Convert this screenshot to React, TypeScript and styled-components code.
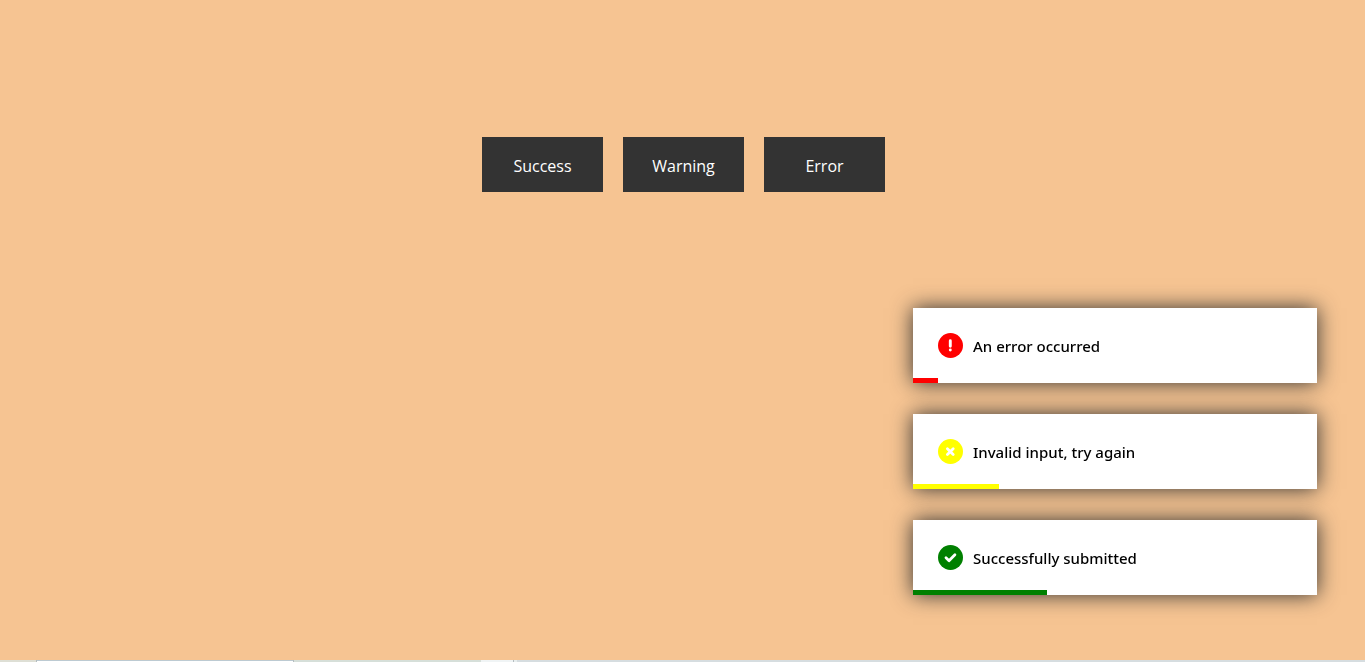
import React from "react";
import styled, { createGlobalStyle } from "styled-components";

const GlobalStyle = createGlobalStyle`
  * { box-sizing: border-box; margin: 0; padding: 0; }
  body {
    background: #f6c492;
    font-family: "Segoe UI", "Noto Sans", "Open Sans", sans-serif;
  }
`;

const Page = styled.div`
  min-height: 100vh;
  display: flex;
  flex-direction: column;
`;

const Actions = styled.main`
  flex: 1;
  display: flex;
  justify-content: center;
  align-items: flex-start;
  gap: 20px;
  padding: 137px 0 0 2px;
`;

const ActionButton = styled.button`
  width: 121px;
  height: 55px;
  padding-top: 3px;
  border: 0;
  background: #333;
  color: #fff;
  font-family: "Segoe UI", "Open Sans", sans-serif;
  font-size: 16px;
  cursor: pointer;
`;

const ToastStack = styled.div`
  position: fixed;
  right: 48px;
  bottom: 67px;
  display: flex;
  flex-direction: column;
  gap: 31px;
`;

const Toast = styled.div`
  width: 404px;
  height: 75px;
  display: flex;
  flex-direction: column;
  background: #fff;
  box-shadow: 0 0 20px #333;
`;

const Message = styled.p`
  flex: 1;
  display: flex;
  align-items: center;
  gap: 10px;
  padding: 5px 25px 0;
  color: #000;
  font-size: 15px;
  font-weight: 500;
`;

const StatusIcon = styled.svg`
  width: 25px;
  height: 25px;
  fill: none;
  stroke: #fff;
  stroke-linecap: round;
  stroke-linejoin: round;
`;

const Timer = styled.div<{ $color: string }>`
  height: 5px;
  background: ${({ $color }) => $color};
`;

const Taskbar = styled.footer`
  display: flex;
  height: 2px;
  background: #d6dde0;
`;

const Segment = styled.div<{ $width: number; $color: string; $line?: string }>`
  width: ${({ $width }) => $width}px;
  background: ${({ $color }) => $color};
  border-top: ${({ $line }) => ($line ? `1px solid ${$line}` : "0")};
`;

const toasts = [
  { text: "An error occurred", color: "red", mark: "M12.3 7.8v5.4M12.3 17v.1", stroke: 2.9, left: 25 },
  { text: "Invalid input, try again", color: "yellow", mark: "M9.4 9.7l5.8 5.8M15.2 9.7l-5.8 5.8", stroke: 2.8, left: 86 },
  { text: "Successfully submitted", color: "green", mark: "M8 12.8l3 2.9 5.9-6", stroke: 2.8, left: 134 },
];

export default function App() {
  return (
    <Page>
      <GlobalStyle />
      <Actions>
        <ActionButton type="button">Success</ActionButton>
        <ActionButton type="button">Warning</ActionButton>
        <ActionButton type="button">Error</ActionButton>
      </Actions>
      <ToastStack role="status">
        {toasts.map(({ text, color, mark, stroke, left }) => (
          <Toast key={color}>
            <Message>
              <StatusIcon viewBox="0 0 25 25" aria-hidden="true">
                <circle cx="12.5" cy="12.5" r="12.5" fill={color} stroke="none" />
                <path d={mark} strokeWidth={stroke} />
              </StatusIcon>
              {text}
            </Message>
            <Timer $color={color} style={{ width: left }} />
          </Toast>
        ))}
      </ToastStack>
      <Taskbar>
        <Segment $width={36} $color="#dedfd5" />
        <Segment $width={1} $color="#b4bcc0" />
        <Segment $width={256} $color="#ffffff" $line="#bccad2" />
        <Segment $width={1} $color="#b4bcc0" />
        <Segment $width={187} $color="#d6dfd9" />
        <Segment $width={32} $color="#f0f4f5" />
        <Segment $width={1} $color="#b4bcc0" />
        <Segment $width={3} $color="#e8eeee" />
      </Taskbar>
    </Page>
  );
}
